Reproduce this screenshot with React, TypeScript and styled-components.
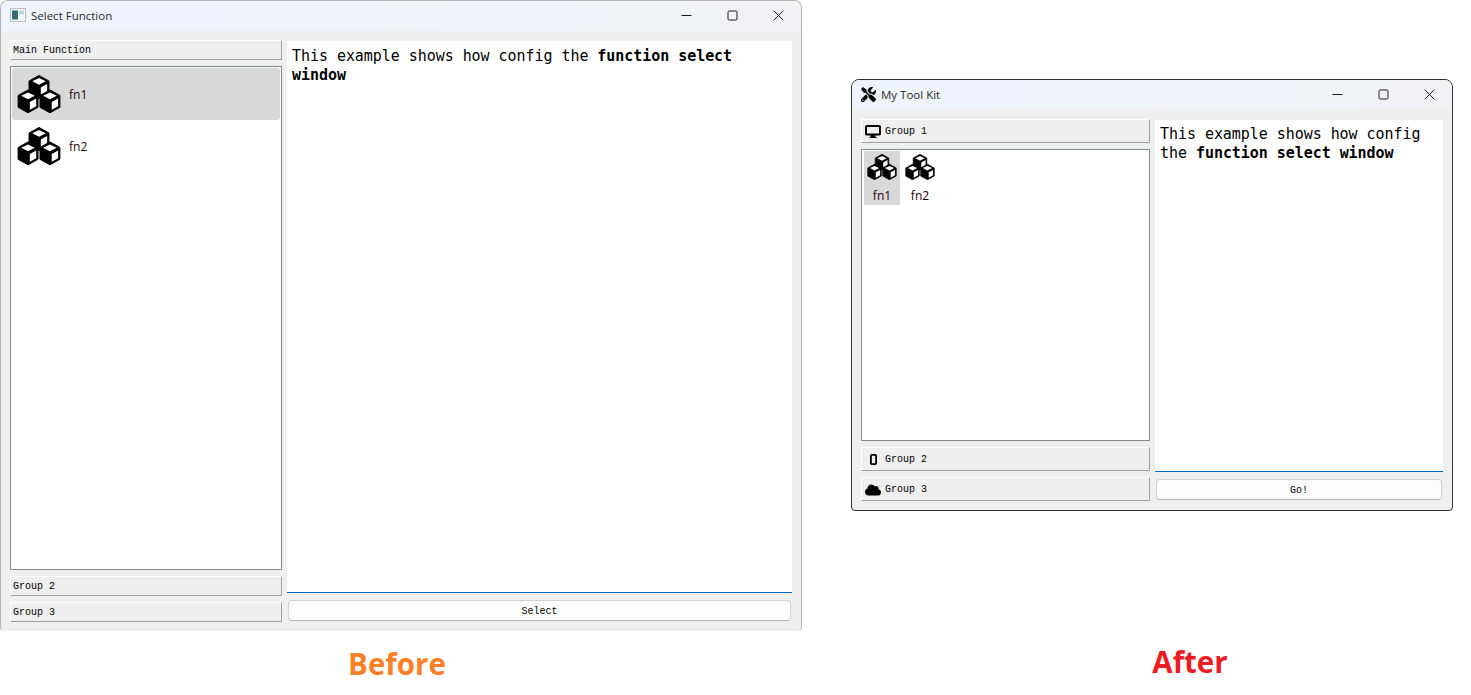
import { ReactNode } from "react";
import styled, { createGlobalStyle } from "styled-components";
import { FaCloud, FaTools } from "react-icons/fa";

const GlobalStyle = createGlobalStyle`
  html, body {
    margin: 0;
    padding: 0;
    background: #fff;
  }
`;

const Stage = styled.div`
  display: flex;
  align-items: flex-start;
  width: 1471px;
  height: 695px;
  overflow: hidden;
`;

const Shot = styled.section<{ $left: number; $top: number; $width: number }>`
  display: flex;
  flex-direction: column;
  align-items: center;
  flex: none;
  width: ${(p) => p.$width}px;
  margin-left: ${(p) => p.$left}px;
  padding-top: ${(p) => p.$top}px;
`;

const Caption = styled.div<{ $color: string; $offset: number; $gap: number }>`
  margin-top: ${(p) => p.$gap}px;
  margin-left: ${(p) => p.$offset}px;
  font-family: "Open Sans", "Noto Sans", sans-serif;
  font-size: 29.5px;
  font-weight: 700;
  line-height: 40px;
  color: ${(p) => p.$color};
`;

const Frame = styled.div<{ $width: number; $height: number; $dark?: boolean }>`
  display: flex;
  flex-direction: column;
  box-sizing: border-box;
  width: ${(p) => p.$width}px;
  height: ${(p) => p.$height}px;
  background: #efefef;
  border: 1px solid ${(p) => (p.$dark ? "#2f2f2f" : "#b4b4b4")};
  border-bottom-color: ${(p) => (p.$dark ? "#2f2f2f" : "#efefef")};
  border-radius: 8px 8px 4px 4px;
  overflow: hidden;
`;

const TitleBar = styled.header<{ $inset: number }>`
  display: flex;
  align-items: center;
  flex: none;
  box-sizing: border-box;
  height: 30px;
  padding: 0 0 2px ${(p) => p.$inset}px;
  background: linear-gradient(90deg, #eff3fb 0%, #f1f3fa 45%, #f2f2f5 100%);
`;

const TitleText = styled.span`
  margin-left: 5px;
  font-family: "Open Sans", "Noto Sans", sans-serif;
  font-size: 11.5px;
  color: #2b2b2b;
`;

const AppIcon = styled.span`
  display: flex;
  width: 16px;
  height: 16px;
  align-items: center;
  justify-content: center;
  font-size: 15px;
  color: #000;
`;

const Controls = styled.div`
  display: flex;
  margin-left: auto;
`;

const Control = styled.span`
  display: flex;
  align-items: center;
  justify-content: center;
  width: 46px;
  height: 28px;
  color: #1a1a1a;
`;

const Body = styled.div<{ $left: number; $right: number; $bottom: number }>`
  display: grid;
  grid-template-columns: ${(p) => p.$left}px ${(p) => p.$right}px;
  gap: 5px;
  flex: 1;
  min-height: 0;
  padding: 9px 9px ${(p) => p.$bottom}px;
`;

const Column = styled.div`
  display: flex;
  flex-direction: column;
  min-height: 0;
`;

const GroupHeader = styled.div<{ $height: number }>`
  display: flex;
  align-items: center;
  flex: none;
  box-sizing: border-box;
  height: ${(p) => p.$height}px;
  padding: 1px 0 0 2px;
  background: #efefef;
  border: 1px solid #a0a0a0;
  border-top-color: #fff;
  border-left-color: #fff;
  font-family: "Liberation Mono", monospace;
  font-size: 10px;
  color: #000;

  & + & {
    margin-top: 6px;
  }
`;

const GroupIcon = styled.span`
  display: flex;
  align-items: center;
  justify-content: center;
  width: 18px;
  margin-right: 3px;
  font-size: 16px;
  color: #000;
`;

const IconList = styled.div<{ $grid?: boolean }>`
  display: flex;
  flex: 1;
  flex-direction: ${(p) => (p.$grid ? "row" : "column")};
  align-items: ${(p) => (p.$grid ? "flex-start" : "stretch")};
  gap: ${(p) => (p.$grid ? "2px" : "0")};
  box-sizing: border-box;
  margin: 6px 0;
  padding: ${(p) => (p.$grid ? "1px 2px" : "1px")};
  background: #fff;
  border: 1px solid #828790;
`;

const ListRow = styled.div<{ $selected?: boolean }>`
  display: flex;
  align-items: center;
  gap: 8px;
  height: 52px;
  padding-left: 5px;
  border-radius: 3px;
  background: ${(p) => (p.$selected ? "#d8d8d8" : "transparent")};
`;

const GridCell = styled.div<{ $selected?: boolean }>`
  display: flex;
  flex-direction: column;
  align-items: center;
  width: 36px;
  height: 54px;
  padding-top: 3px;
  box-sizing: border-box;
  background: ${(p) => (p.$selected ? "#d8d8d8" : "transparent")};
`;

const ItemLabel = styled.span<{ $grid?: boolean }>`
  margin-top: ${(p) => (p.$grid ? "7px" : "0")};
  font-family: "Open Sans", "Noto Sans", sans-serif;
  font-size: 12px;
  color: #1f0505;
`;

const Description = styled.div<{ $top: number }>`
  flex: 1;
  box-sizing: border-box;
  margin-top: 1px;
  padding: ${(p) => p.$top}px 5px 5px;
  background: #fff;
  border-bottom: 1px solid #0067c0;
  font-family: "DejaVu Sans Mono", monospace;
  font-size: 15px;
  letter-spacing: -0.05px;
  line-height: 19px;
  color: #000;
`;

const ActionButton = styled.div`
  display: flex;
  align-items: center;
  justify-content: center;
  flex: none;
  box-sizing: border-box;
  height: 21px;
  margin: 7px 1px 1px;
  padding-top: 1px;
  background: #fdfdfd;
  border: 1px solid #d2d2d2;
  border-bottom-color: #b4b4b4;
  border-radius: 4px;
  font-family: "Liberation Mono", monospace;
  font-size: 10px;
  color: #000;
`;

const CubesIcon = ({ size }: { size: number }) => {
  const cube = (x: number, y: number) => (
    <g key={`${x}-${y}`}>
      <path
        d={`M${x} ${y}l10 5.5v12l-10 5.5l-10-5.5v-12z`}
        fill="#000"
        stroke="#000"
        strokeWidth="1"
        strokeLinejoin="round"
      />
      <path d={`M${x} ${y + 2.6}l6.8 3.2l-6.8 3.6l-6.8-3.6z`} fill="#fff" />
      <path d={`M${x + 1.8} ${y + 12}l6.4-3.5v7.9l-6.4 3.5z`} fill="#fff" />
    </g>
  );
  return (
    <svg width={size} height={size * 0.86} viewBox="0 0 44 38" aria-hidden="true">
      {cube(22, 0.5)}
      {cube(11, 15)}
      {cube(33, 15)}
    </svg>
  );
};

const MonitorIcon = () => (
  <svg width="16" height="13" viewBox="0 0 16 13" aria-hidden="true">
    <rect x="1" y="1" width="14" height="8.6" rx="0.8" fill="none" stroke="#000" strokeWidth="2" />
    <path d="M0.5 9h15v1h-15zM6 10h4l0.6 2h1v1H4.4v-1h1z" fill="#000" />
  </svg>
);

const MobileIcon = () => (
  <svg width="7" height="11" viewBox="0 0 7 11" aria-hidden="true">
    <rect x="0.9" y="0.9" width="5.2" height="9.2" rx="0.8" fill="none" stroke="#000" strokeWidth="1.8" />
  </svg>
);

const MinimizeGlyph = () => (
  <svg width="11" height="11" viewBox="0 0 11 11" aria-hidden="true">
    <path d="M0.5 5.5h10" stroke="currentColor" strokeWidth="1" />
  </svg>
);

const MaximizeGlyph = () => (
  <svg width="11" height="11" viewBox="0 0 11 11" aria-hidden="true">
    <rect x="1" y="1" width="9" height="9" rx="1.2" fill="none" stroke="currentColor" strokeWidth="1" />
  </svg>
);

const CloseGlyph = () => (
  <svg width="11" height="11" viewBox="0 0 11 11" aria-hidden="true">
    <path d="M0.7 0.7l9.6 9.6M10.3 0.7l-9.6 9.6" stroke="currentColor" strokeWidth="1" />
  </svg>
);

const DefaultAppIcon = () => (
  <svg width="16" height="14" viewBox="0 0 16 14" aria-hidden="true">
    <rect x="0.5" y="0.5" width="15" height="13" fill="#f4f6f6" stroke="#b9bec2" />
    <rect x="2" y="2.5" width="6" height="9" fill="#2f6f73" />
    <rect x="9" y="2.5" width="5" height="4" fill="#b7d3d6" />
  </svg>
);

const WindowControls = () => (
  <Controls>
    <Control>
      <MinimizeGlyph />
    </Control>
    <Control>
      <MaximizeGlyph />
    </Control>
    <Control>
      <CloseGlyph />
    </Control>
  </Controls>
);

const Group = ({ icon, label, height }: { icon?: ReactNode; label: string; height: number }) => (
  <GroupHeader $height={height}>
    {icon && <GroupIcon>{icon}</GroupIcon>}
    {label}
  </GroupHeader>
);

export default function App() {
  return (
    <Stage>
      <GlobalStyle />

      <Shot $left={0} $top={0} $width={802}>
        <Frame $width={802} $height={631}>
          <TitleBar $inset={9}>
            <AppIcon>
              <DefaultAppIcon />
            </AppIcon>
            <TitleText>Select Function</TitleText>
            <WindowControls />
          </TitleBar>
          <Body $left={272} $right={505} $bottom={8}>
            <Column>
              <Group label="Main Function" height={20} />
              <IconList>
                <ListRow $selected>
                  <CubesIcon size={44} />
                  <ItemLabel>fn1</ItemLabel>
                </ListRow>
                <ListRow>
                  <CubesIcon size={44} />
                  <ItemLabel>fn2</ItemLabel>
                </ListRow>
              </IconList>
              <Group label="Group 2" height={20} />
              <Group label="Group 3" height={20} />
            </Column>
            <Column>
              <Description $top={6}>
                This example shows how config the <b>function select window</b>
              </Description>
              <ActionButton>Select</ActionButton>
            </Column>
          </Body>
        </Frame>
        <Caption $color="#ff7f27" $offset={-8} $gap={13}>
          Before
        </Caption>
      </Shot>

      <Shot $left={49} $top={79} $width={602}>
        <Frame $width={602} $height={432} $dark>
          <TitleBar $inset={8}>
            <AppIcon>
              <FaTools />
            </AppIcon>
            <TitleText>My Tool Kit</TitleText>
            <WindowControls />
          </TitleBar>
          <Body $left={289} $right={288} $bottom={9}>
            <Column>
              <Group icon={<MonitorIcon />} label="Group 1" height={24} />
              <IconList $grid>
                <GridCell $selected>
                  <CubesIcon size={30} />
                  <ItemLabel $grid>fn1</ItemLabel>
                </GridCell>
                <GridCell>
                  <CubesIcon size={30} />
                  <ItemLabel $grid>fn2</ItemLabel>
                </GridCell>
              </IconList>
              <Group icon={<MobileIcon />} label="Group 2" height={24} />
              <Group icon={<FaCloud />} label="Group 3" height={24} />
            </Column>
            <Column>
              <Description $top={5}>
                This example shows how config the <b>function select window</b>
              </Description>
              <ActionButton>Go!</ActionButton>
            </Column>
          </Body>
        </Frame>
        <Caption $color="#ed1c24" $offset={76} $gap={131}>
          After
        </Caption>
      </Shot>
    </Stage>
  );
}
